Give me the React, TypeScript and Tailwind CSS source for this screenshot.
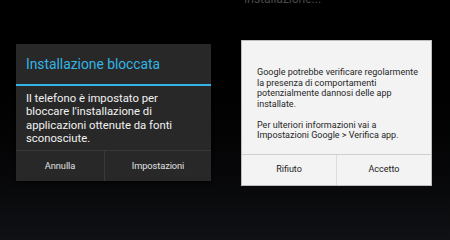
export default function App() {
  return (
    <div className="w-[450px] h-[240px] overflow-hidden flex items-start bg-gradient-to-b from-[#000000] to-[#101114] font-['Roboto',sans-serif]">
      {/* dark holo dialog */}
      <div className="ml-[16px] mt-[44px] w-[195px] bg-[#282828] shadow-[0_1px_3px_rgba(0,0,0,0.8)]">
        <div className="h-[40px] flex items-center px-[10px] text-[13.8px] text-[#33b5e5]">
          Installazione bloccata
        </div>
        <div className="h-[2px] bg-[#33b5e5]" />
        <p className="px-[10px] pt-[6px] pb-[4px] text-[11.3px] leading-[13.4px] text-[#f2f2f2]">
          Il telefono è impostato per<br />
          bloccare l'installazione di<br />
          applicazioni ottenute da fonti<br />
          sconosciute.
        </p>
        <div className="flex h-[31px] border-t border-[#393939] text-[9.3px] tracking-[-0.1px] text-[#e0e0e0]">
          <div className="w-[89px] flex items-center justify-center border-r border-[#393939]">Annulla</div>
          <div className="flex-1 flex items-center justify-center">Impostazioni</div>
        </div>
      </div>

      {/* light dialog */}
      <div className="ml-[30px] flex flex-col">
        <div className="mt-[-9px] ml-[3px] h-[49px] text-[12px] text-[#4a4a4a] leading-[16px]">Installazione...</div>
        <div className="w-[191px] h-[146px] flex flex-col bg-[#f3f3f3] border border-[#bdbdbd]">
          <div className="flex-1 pl-[15px] pr-[6px] pt-[26px] text-[9px] leading-[10.5px] text-[#262626] whitespace-nowrap">
            <p>
              Google potrebbe verificare regolarmente<br />
              la presenza di comportamenti<br />
              potenzialmente dannosi delle app<br />
              installate.
            </p>
            <p className="mt-[10.5px]">
              Per ulteriori informazioni vai a<br />
              Impostazioni Google &gt; Verifica app.
            </p>
          </div>
          <div className="flex h-[31px] border-t border-[#cfcfcf] text-[9px] text-[#222]">
            <div className="w-[95px] flex items-center justify-center border-r border-[#dcdcdc]">Rifiuto</div>
            <div className="flex-1 flex items-center justify-center">Accetto</div>
          </div>
        </div>
      </div>
    </div>
  );
}
